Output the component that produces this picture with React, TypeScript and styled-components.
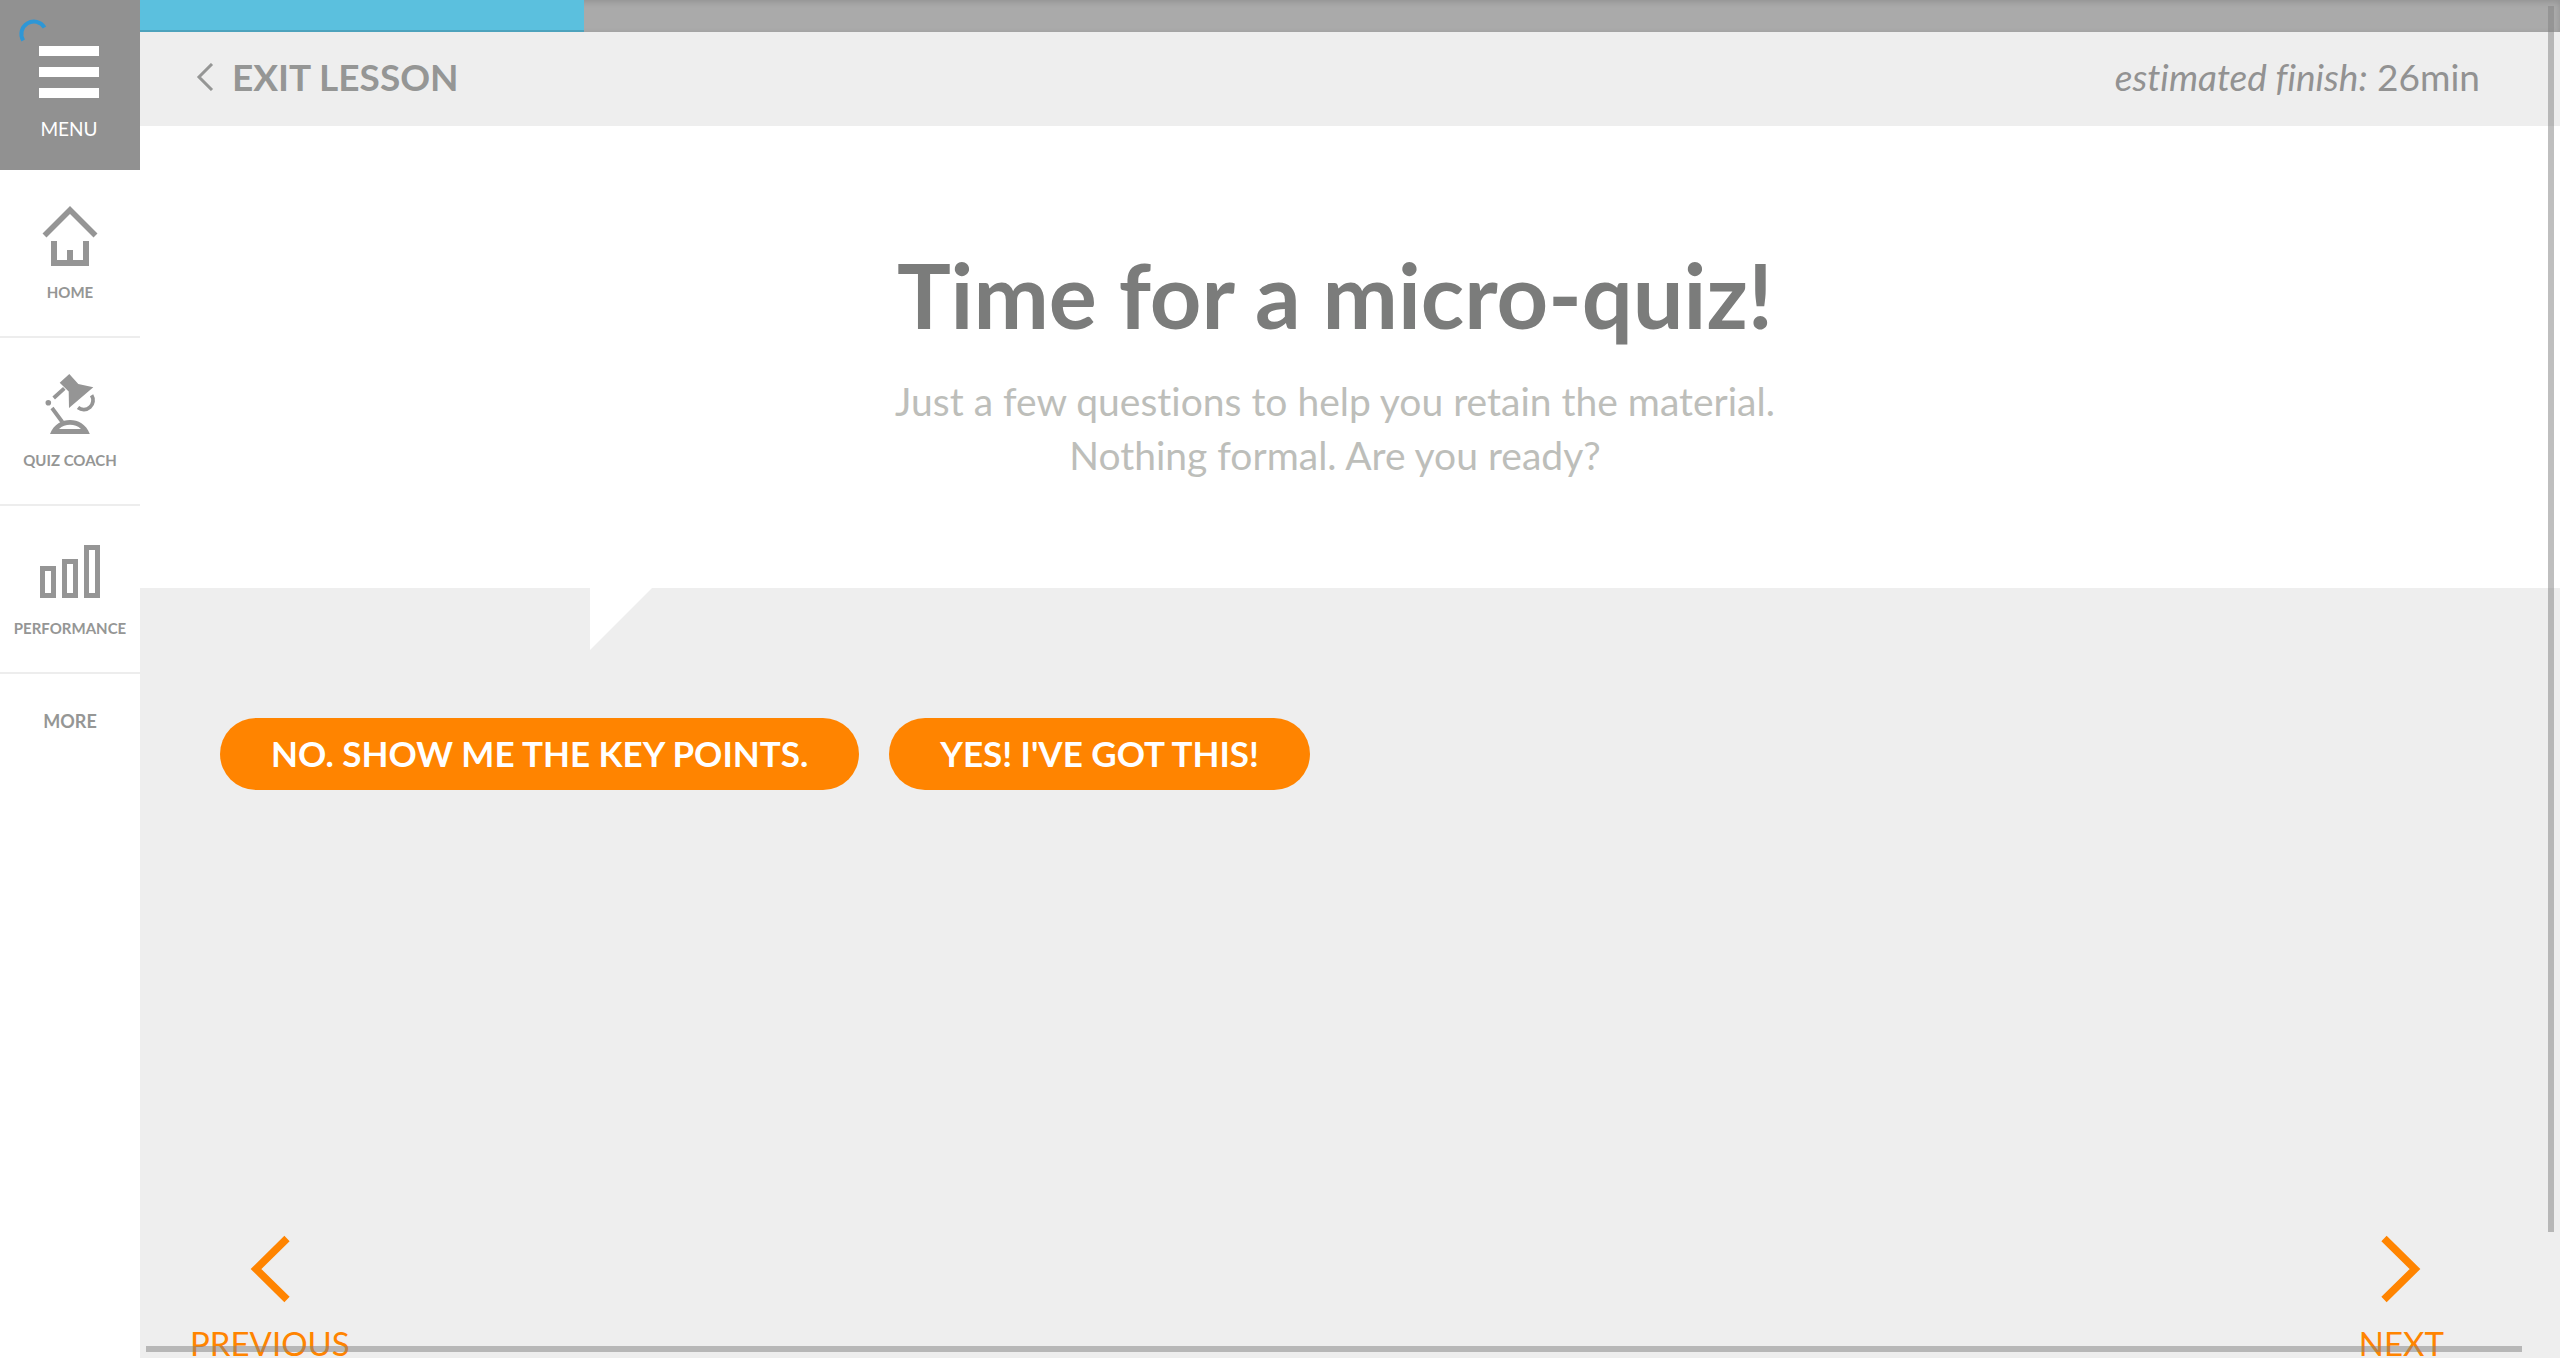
import React from "react";
import styled, { createGlobalStyle } from "styled-components";

const GlobalStyle = createGlobalStyle`
  *, *::before, *::after { box-sizing: border-box; }
  html, body { margin: 0; padding: 0; }
  body {
    background: #eee;
    color: #959695;
    font-family: Lato, "Noto Sans", sans-serif;
    font-variant-ligatures: none;
    overflow: hidden;
  }
  a { color: inherit; text-decoration: none; }
  button { border: 0; margin: 0; padding: 0; background: none; color: inherit; font: inherit; cursor: pointer; }
  h1, p { margin: 0; }
  svg { display: block; }
`;

const Page = styled.div`
  position: relative;
  display: flex;
  height: 100vh;
`;

const Sidebar = styled.nav`
  display: flex;
  flex-direction: column;
  flex: 0 0 140px;
  background: #fff;
`;

const MenuButton = styled.button`
  position: relative;
  display: flex;
  flex-direction: column;
  align-items: center;
  gap: 19px;
  height: 170px;
  padding: 46px 2px 0 0;
  background: #919191;
  color: #fff;
  font-size: 19px;
  line-height: 24px;
`;

const Spinner = styled.svg`
  position: absolute;
  top: 16px;
  left: 16px;
`;

const SideLink = styled.a`
  display: flex;
  flex-direction: column;
  align-items: center;
  gap: 10px;
  height: 168px;
  padding-top: 34px;
  border-bottom: 2px solid #ededed;
  font-size: 15px;
  line-height: 24px;
  font-weight: 700;
`;

const MoreLink = styled.a`
  padding: 35px 0;
  text-align: center;
  font-size: 18px;
  line-height: 24px;
  font-weight: 700;
`;

const Content = styled.div`
  display: flex;
  flex-direction: column;
  flex: 1;
  min-width: 0;
`;

const ProgressTrack = styled.div`
  flex: 0 0 32px;
  background: #aaa;
  box-shadow: inset 0 2px 6px rgba(0, 0, 0, 0.15);
`;

const ProgressFill = styled.div`
  height: 32px;
  background: #5bc0de;
  box-shadow: inset 0 -2px 0 rgba(0, 0, 0, 0.15);
`;

const Header = styled.header`
  display: flex;
  align-items: center;
  justify-content: space-between;
  flex: 0 0 94px;
  padding: 0 80px 4px 56px;
  font-size: 37px;
  line-height: 48px;
`;

const ExitLink = styled.a`
  display: flex;
  align-items: center;
  gap: 18px;
  font-weight: 700;
`;

const Estimate = styled.p`
  color: #929292;
`;

const Hero = styled.section`
  position: relative;
  flex: 0 0 462px;
  padding: 112px 30px 0 0;
  background: #fff;
  text-align: center;
`;

const Tail = styled.svg`
  position: absolute;
  top: 100%;
  left: 450px;
`;

const Title = styled.h1`
  color: #7b7c7b;
  font-size: 90px;
  line-height: 112px;
  font-weight: 700;
`;

const Subtitle = styled.p`
  margin-top: 24px;
  color: #bdbeba;
  font-size: 39px;
  line-height: 54px;
`;

const Answers = styled.section`
  display: flex;
  align-items: flex-start;
  flex: 1;
  gap: 30px;
  padding: 130px 80px 0;
`;

const AnswerButton = styled.button`
  height: 72px;
  padding: 0 51px 2px;
  border-radius: 36px;
  background: #ff8400;
  color: #fff;
  font-size: 35px;
  line-height: 40px;
  font-weight: 700;
  white-space: nowrap;
`;

const Pager = styled.footer`
  display: flex;
  justify-content: space-between;
  padding: 0 116px 0 50px;
`;

const PagerButton = styled.button`
  display: flex;
  flex-direction: column;
  align-items: center;
  gap: 25px;
  color: #ff8400;
  font-size: 33px;
  line-height: 30px;
`;

const ScrollThumb = styled.div<{ $vertical?: boolean }>`
  position: absolute;
  background: rgba(128, 128, 128, 0.5);
  ${(p) =>
    p.$vertical
      ? "top: 6px; right: 6px; bottom: 126px; width: 6px;"
      : "left: 146px; right: 38px; bottom: 6px; height: 6px;"}
`;

const Chevron = ({ right = false }: { right?: boolean }) => (
  <svg width="40" height="68" viewBox="0 0 40 68" fill="none" stroke="currentColor" strokeWidth="7.5" aria-hidden="true">
    <path d={right ? "M3 3.5 L34 34 L3 64.5" : "M37 3.5 L6 34 L37 64.5"} />
  </svg>
);

const HomeIcon = () => (
  <svg width="60" height="66" viewBox="40 204 60 66" aria-hidden="true">
    <path d="M44.5 235.5 L70 210 L95.5 235.5" fill="none" stroke="#959595" strokeWidth="5.6" />
    <path d="M51 241h6v19h10v-10h6v10h10v-19h6v25H51z" fill="#959595" />
  </svg>
);

const LampIcon = () => (
  <svg width="60" height="66" viewBox="40 372 60 66" aria-hidden="true">
    <path d="M59.7 382.7 L69.3 374 L78.3 384 L93.3 387.3 L69 408 L68.7 391.5z" fill="#959595" />
    <path d="M53.7 398 L64.3 388.3 M52 408 L62.3 422 M91.6 395.3 A9.3 9.3 0 0 1 78 407.6" fill="none" stroke="#959595" strokeWidth="3.8" />
    <circle cx="48.3" cy="402.7" r="2.8" fill="#959595" />
    <path fillRule="evenodd" d="M50 434 C54 424 62 420 70 420 S86 424 89.8 434z M59 429 H81 C78 426 74 424.7 70 424.7 S62 426 59 429z" fill="#959595" />
  </svg>
);

const BarsIcon = () => (
  <svg width="60" height="66" viewBox="40 540 60 66" aria-hidden="true">
    <path d="M42.5 568.5h11v27h-11z M64.5 561.5h11v34h-11z M86.5 547.5h11v48h-11z" fill="none" stroke="#959595" strokeWidth="5" />
  </svg>
);

export default function App() {
  return (
    <>
      <GlobalStyle />
      <Page>
        <Sidebar aria-label="Main">
          <MenuButton type="button">
            <Spinner width="34" height="28" viewBox="0 0 34 28" fill="none" stroke="#2e97d6" strokeWidth="4" aria-hidden="true">
              <path d="M7.2 24.5 A12 12 0 0 1 28.5 11.5" />
            </Spinner>
            <svg width="60" height="52" viewBox="0 0 60 52" fill="#fff" aria-hidden="true">
              <path d="M0 0h60v10H0z M0 21h60v10H0z M0 42h60v10H0z" />
            </svg>
            <span>MENU</span>
          </MenuButton>
          <SideLink href="#home"><HomeIcon />HOME</SideLink>
          <SideLink href="#quiz-coach"><LampIcon />QUIZ COACH</SideLink>
          <SideLink href="#performance"><BarsIcon />PERFORMANCE</SideLink>
          <MoreLink href="#more">MORE</MoreLink>
        </Sidebar>
        <Content>
          <ProgressTrack role="progressbar" aria-valuenow={18} aria-label="Lesson progress">
            <ProgressFill style={{ width: `${(444 / 2420) * 100}%` }} />
          </ProgressTrack>
          <Header>
            <ExitLink href="#exit">
              <svg width="18" height="28" viewBox="0 0 18 28" fill="none" stroke="currentColor" strokeWidth="3" aria-hidden="true">
                <path d="M16 1 L3 14 L16 27" />
              </svg>
              EXIT LESSON
            </ExitLink>
            <Estimate><em>estimated finish:</em> 26min</Estimate>
          </Header>
          <Hero>
            <Title>Time for a micro-quiz!</Title>
            <Subtitle>
              Just a few questions to help you retain the material.
              <br />
              Nothing formal. Are you ready?
            </Subtitle>
            <Tail width="62" height="62" viewBox="0 0 62 62" aria-hidden="true">
              <path d="M0 0H62L0 62z" fill="#fff" />
            </Tail>
          </Hero>
          <Answers>
            <AnswerButton type="button">NO. SHOW ME THE KEY POINTS.</AnswerButton>
            <AnswerButton type="button">YES! I'VE GOT THIS!</AnswerButton>
          </Answers>
          <Pager>
            <PagerButton type="button"><Chevron />PREVIOUS</PagerButton>
            <PagerButton type="button"><Chevron right />NEXT</PagerButton>
          </Pager>
        </Content>
        <ScrollThumb $vertical />
        <ScrollThumb />
      </Page>
    </>
  );
}
